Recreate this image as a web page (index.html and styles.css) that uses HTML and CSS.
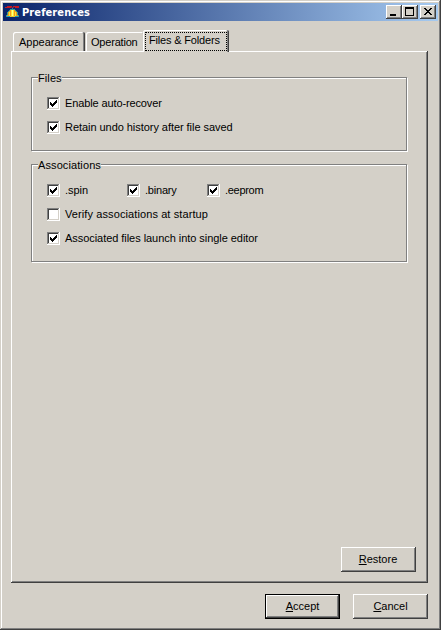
FILE: index.html
```html
<!DOCTYPE html>
<html lang="en">
<head>
<meta charset="utf-8">
<title>Preferences</title>
<link rel="stylesheet" href="styles.css">
</head>
<body>
<svg width="0" height="0" class="defs" shape-rendering="crispEdges">
  <symbol id="tick" viewBox="0 0 7 7"><path d="M0 2h1v3h-1zM1 3h1v3h-1zM2 4h1v3h-1zM3 3h1v3h-1zM4 2h1v3h-1zM5 1h1v3h-1zM6 0h1v3h-1z"/></symbol>
</svg>
<div class="window">
  <header class="titlebar">
    <svg class="logo" width="16" height="16" viewBox="0 0 16 16" shape-rendering="crispEdges">
      <path fill="#c81820" d="M0 2h6v1h-6zM10 2h4v1h-4zM2 1h5v1h-5zM8 1h6v1h-6z"/>
      <path fill="#802040" d="M6 2h3v1h-3z"/>
      <path fill="#3080b0" d="M7 3h1v1h-1z"/>
      <path fill="#30a090" d="M5 4h5v1h-5zM4 5h1v1h-1zM10 5h1v1h-1zM3 6h1v1h-1zM11 6h1v1h-1zM2 7h1v3h-1zM12 7h1v3h-1zM1 10h1v2h-1zM13 10h1v2h-1z"/>
      <path fill="#f09820" d="M5 5h5v1h-5zM4 6h7v1h-7zM3 7h9v3h-9zM2 10h11v1h-11z"/>
      <path fill="#ffe830" d="M6 5h3v6h-3zM4 7h1v4h-1zM10 7h1v4h-1z"/>
      <path fill="#ffff90" d="M7 5h1v6h-1z"/>
      <path fill="#20a0c0" d="M2 11h3v1h-3zM10 11h3v1h-3z"/>
      <path fill="#e8c830" d="M5 11h5v1h-5z"/>
    </svg>
    <h1>Preferences</h1>
    <div class="controls">
      <button class="raised"><svg width="12" height="10" shape-rendering="crispEdges"><path d="M2 7h6v2h-6z"/></svg></button>
      <button class="raised"><svg width="12" height="10" shape-rendering="crispEdges"><path fill-rule="evenodd" d="M1 0h9v9h-9zM2 2v6h7v-6z"/></svg></button>
      <button class="raised close"><svg width="12" height="10" shape-rendering="crispEdges"><path d="M2 1h2v1h-2zM8 1h2v1h-2zM3 2h2v1h-2zM7 2h2v1h-2zM4 3h4v1h-4zM5 4h2v1h-2zM4 5h4v1h-4zM3 6h2v1h-2zM7 6h2v1h-2zM2 7h2v1h-2zM8 7h2v1h-2z"/></svg></button>
    </div>
  </header>
  <nav class="tabs">
    <div class="tab appearance"><span>Appearance</span></div>
    <div class="tab operation"><span>Operation</span></div>
    <div class="tab selected"><span class="focus">Files &amp; Folders</span></div>
  </nav>
  <main class="panel">
    <section class="group files">
      <h2>Files</h2>
      <label><i class="box"><svg width="7" height="7"><use href="#tick"/></svg></i><span class="t-recover">Enable auto-recover</span></label>
      <label><i class="box"><svg width="7" height="7"><use href="#tick"/></svg></i><span class="t-undo">Retain undo history after file saved</span></label>
    </section>
    <section class="group assoc">
      <h2>Associations</h2>
      <div class="row">
        <label><i class="box"><svg width="7" height="7"><use href="#tick"/></svg></i><span class="t-spin">.spin</span></label>
        <label><i class="box"><svg width="7" height="7"><use href="#tick"/></svg></i><span class="t-binary">.binary</span></label>
        <label><i class="box"><svg width="7" height="7"><use href="#tick"/></svg></i><span class="t-eeprom">.eeprom</span></label>
      </div>
      <label><i class="box"></i><span class="t-verify">Verify associations at startup</span></label>
      <label><i class="box"><svg width="7" height="7"><use href="#tick"/></svg></i><span class="t-launch">Associated files launch into single editor</span></label>
    </section>
    <button class="raised push restore"><span><u>R</u>estore</span></button>
  </main>
  <footer>
    <button class="raised push default"><span><u>A</u>ccept</span></button>
    <button class="raised push"><span><u>C</u>ancel</span></button>
  </footer>
</div>
</body>
</html>
```
FILE: styles.css
```css
* { box-sizing: border-box; }
body { margin: 0; background: #d4d0c8; color: #000; font: 11px/13px "Liberation Sans", Arial, sans-serif; }
.defs { display: block; height: 0; }
.window {
  width: 441px; height: 630px; padding: 3px; display: flex; flex-direction: column;
  background: #d4d0c8;
  box-shadow: inset -1px -1px #404040, inset 1px 1px #d4d0c8, inset -2px -2px #808080, inset 2px 2px #fff;
}
.titlebar {
  height: 18px; display: flex; align-items: center; padding: 0 2px; flex: none;
  background: linear-gradient(90deg, #0a246a, #a6caf0);
}
.logo { display: block; flex: none; margin-top: 2px; }
h1 { margin: 1px 0 0 1px; color: #fff; font: bold 11px/18px "DejaVu Sans Condensed", "DejaVu Sans", sans-serif; letter-spacing: .1px; }
.controls { margin-left: auto; display: flex; }
button { font: inherit; color: #000; border: 0; border-radius: 0; padding: 0; margin: 0; display: block; }
.raised { background: #d4d0c8; box-shadow: inset -1px -1px #404040, inset 1px 1px #fff, inset -2px -2px #808080; }
.controls button { width: 16px; height: 14px; padding: 2px; }
.controls svg { display: block; }
.controls .close { margin-left: 2px; }
.tabs { display: flex; align-items: flex-end; height: 22px; margin: 9px 0 0 10px; flex: none; position: relative; z-index: 1; }
.tab {
  height: 19px; white-space: nowrap; padding: 4px 0 0 5px; border-radius: 2px 2px 0 0; background: #d4d0c8;
  box-shadow: inset -1px 0 #404040, inset 1px 1px #fff, inset -2px 0 #808080; margin-bottom: 1px;
}
.appearance { width: 72px; padding-left: 6px; }
.operation { width: 59px; margin-left: 1px; letter-spacing: -.2px; }
.selected { width: 86px; height: 22px; margin: 0 0 0 -2px; padding: 2px; letter-spacing: -.17px; }
.focus { display: block; width: 82px; height: 19px; padding-left: 3px; border: 1px dotted #000; line-height: 15px; }
.panel {
  width: 417px; height: 532px; margin: -1px 0 0 8px; padding: 20px; display: flex; flex-direction: column; flex: none;
  box-shadow: inset -1px -1px #404040, inset 1px 1px #fff, inset -2px -2px #808080;
}
.group { width: 376px; margin-top: 6px; padding: 0 15px; border: 1px solid #808080; box-shadow: 1px 1px #fff, inset 1px 1px #fff; flex: none; }
.files { height: 74px; }
.assoc { height: 98px; margin-top: 13px; }
h2 { font: inherit; width: max-content; margin: -6px 0 6px -9px; background: #d4d0c8; letter-spacing: .1px; }
.group label { display: flex; align-items: center; height: 24px; white-space: nowrap; }
.row { display: flex; }
.row label { width: 80px; }
.box {
  width: 13px; height: 13px; margin-right: 5px; padding: 3px; flex: none; background: #fff;
  box-shadow: inset -1px -1px #fff, inset 1px 1px #808080, inset -2px -2px #d4d0c8, inset 2px 2px #404040;
}
.box svg { display: block; shape-rendering: crispEdges; }
.t-recover { letter-spacing: -.12px; }
.t-undo { letter-spacing: -.05px; }
.t-spin { letter-spacing: -.05px; }
.t-binary { letter-spacing: -.2px; }
.t-eeprom { letter-spacing: -.3px; }
.t-verify { letter-spacing: .1px; }
.t-launch { letter-spacing: -.05px; }
.push { width: 75px; height: 25px; }
.restore { margin: auto -8px -9px auto; padding-right: 1px; flex: none; }
u { text-decoration: underline; text-underline-offset: 1px; text-decoration-skip-ink: none; }
footer { display: flex; justify-content: flex-end; gap: 13px; margin: 11px 10px 0 0; }
.default { box-shadow: inset 0 0 0 1px #000, inset -2px -2px #404040, inset 2px 2px #fff, inset -3px -3px #808080; }
```
